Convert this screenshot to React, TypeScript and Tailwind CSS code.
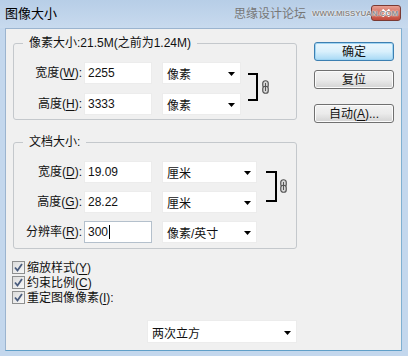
import React from "react";

const FONT = "font-['Liberation_Sans','Noto_Sans_CJK_SC',sans-serif]";

function Arrow() {
  return (
    <svg width="7" height="4" viewBox="0 0 7 4">
      <polygon points="0,0 7,0 3.5,4" fill="#000" />
    </svg>
  );
}

function Select({ text, className }: { text: string; className: string }) {
  return (
    <div
      className={`h-[22px] bg-white border border-[#ececec] flex items-center justify-between pl-[4px] pr-[5px] ${className}`}
    >
      <span className="pt-[4px]">{text}</span>
      <span className="pt-[2px]">
        <Arrow />
      </span>
    </div>
  );
}

function Row({
  label,
  u,
  value,
  unit,
  selClass,
  focused,
}: {
  label: string;
  u: string;
  value: string;
  unit: string;
  selClass: string;
  focused?: boolean;
}) {
  return (
    <div className="flex items-center h-[22px]">
      <div className="w-[68px] text-right whitespace-nowrap">
        {label}(<span className="underline underline-offset-2">{u}</span>):
      </div>
      <div
        className={`ml-[2px] w-[68px] h-[22px] bg-white flex items-center pl-[3px] border ${
          focused ? "border-[#b4c0cc]" : "border-[#ececec]"
        }`}
      >
        {value}
        {focused && <span className="inline-block w-[1px] h-[14px] bg-black ml-[1px]" />}
      </div>
      <Select text={unit} className={`ml-[10px] ${selClass}`} />
    </div>
  );
}

function Chain() {
  return (
    <svg width="7" height="14" viewBox="0 0 7 14">
      <rect x="0.75" y="0.75" width="5.5" height="7" rx="2.6" fill="#d8d8d8" stroke="#555" strokeWidth="1.2" />
      <rect x="0.75" y="6.25" width="5.5" height="7" rx="2.6" fill="#d8d8d8" stroke="#555" strokeWidth="1.2" />
      <line x1="3.5" y1="3" x2="3.5" y2="11" stroke="#555" strokeWidth="1" />
    </svg>
  );
}

function Checkbox({ children }: { children: React.ReactNode }) {
  return (
    <div className="flex items-center h-[15px]">
      <div className="w-[13px] h-[13px] border border-[#8e8f8f] bg-gradient-to-br from-[#dcdcdc] to-[#f8f8f8] flex items-center justify-center">
        <svg width="9" height="9" viewBox="0 0 9 9">
          <path d="M1 4.5 L3.5 7.5 L8 1" fill="none" stroke="#4a5c7e" strokeWidth="1.8" />
        </svg>
      </div>
      <div className="ml-[2px] whitespace-nowrap">{children}</div>
    </div>
  );
}

function Button({ children, primary }: { children: React.ReactNode; primary?: boolean }) {
  return (
    <div
      className={`w-[80px] h-[19px] rounded-[3px] border flex items-center justify-center ${
        primary
          ? "border-[#3c7fb1] bg-gradient-to-b from-[#eaf6fd] via-[#d9f0fc] to-[#a7d9f5] shadow-[inset_0_0_0_1px_#9fd4f2]"
          : "border-[#707070] bg-gradient-to-b from-[#f2f2f2] via-[#ebebeb] to-[#d3d3d3] shadow-[inset_0_0_0_1px_#fbfbfb]"
      }`}
    >
      {children}
    </div>
  );
}

export default function App() {
  return (
    <div
      className={`w-[408px] h-[356px] overflow-hidden flex flex-col bg-[#c3d7ed] text-[12px] leading-[16px] text-[#111] ${FONT}`}
    >
      {/* title bar */}
      <div className="relative h-[28px] shrink-0 flex items-center pl-[5px] bg-gradient-to-b from-[#b7cee7] to-[#c8daee]">
        <span className="text-[13px] text-black">图像大小</span>
        <div className="absolute left-[371px] top-[5px] w-[30px] h-[16px] rounded-[3px] border border-[#7a3a33] bg-gradient-to-b from-[#e8a093] via-[#d0695b] to-[#c44b3c] flex items-center justify-center">
          <svg width="10" height="8" viewBox="0 0 10 8">
            <path d="M1.5 0.5 L8.5 7.5 M8.5 0.5 L1.5 7.5" stroke="#fff" strokeWidth="2" />
          </svg>
        </div>
        <div className="absolute z-10 left-[234px] top-[6px] flex items-center whitespace-nowrap">
          <span className="text-[12px] leading-[16px] text-[#777]">思缘设计论坛</span>
          <span className="ml-[6px] text-[8px] leading-[16px] font-bold tracking-[-0.1px] text-[#8a8a8a] [text-shadow:0_0_2px_#fff,0_0_1px_#fff]">
            WWW.MISSYUAN.COM
          </span>
        </div>
      </div>

      {/* content */}
      <div className="flex-1 ml-[5px] mr-[6px] mb-[5px] bg-[#f0f0f0] border border-[#9bb4cf] border-r-[#7fb0d2] border-b-[#5f9fc8] flex">
        {/* left column */}
        <div className="ml-[7px] mt-[6px] w-[284px] flex flex-col">
          <fieldset className="border border-[#c4c8cc] rounded-[3px] pb-[4px]">
            <legend className="ml-[9px] px-[6px] leading-[16px]">像素大小:21.5M(之前为1.24M)</legend>
            <div className="flex pt-[11px]">
              <div className="flex flex-col gap-[9px]">
                <Row label="宽度" u="W" value="2255" unit="像素" selClass="w-[79px]" />
                <Row label="高度" u="H" value="3333" unit="像素" selClass="w-[79px]" />
              </div>
              <div className="ml-[7px] mt-[11px] w-[10px] h-[28px] border-y-2 border-r-2 border-black" />
              <div className="ml-[4px] mt-[18px]">
                <Chain />
              </div>
            </div>
          </fieldset>

          <fieldset className="mt-[14px] border border-[#c4c8cc] rounded-[3px] pb-[5px]">
            <legend className="ml-[9px] px-[6px] leading-[16px]">文档大小:</legend>
            <div className="flex flex-col gap-[8px] pt-[11px]">
              <div className="flex">
                <div className="flex flex-col gap-[8px]">
                  <Row label="宽度" u="D" value="19.09" unit="厘米" selClass="w-[95px]" />
                  <Row label="高度" u="G" value="28.22" unit="厘米" selClass="w-[95px]" />
                </div>
                <div className="ml-[9px] mt-[10px] w-[11px] h-[31px] border-y-2 border-r-2 border-black" />
                <div className="ml-[3px] mt-[18px]">
                  <Chain />
                </div>
              </div>
              <Row label="分辨率" u="R" value="300" unit="像素/英寸" selClass="w-[95px]" focused />
            </div>
          </fieldset>

          <div className="mt-[11px] -ml-[1px] flex flex-col">
            <Checkbox>
              缩放样式(<span className="underline underline-offset-2">Y</span>)
            </Checkbox>
            <Checkbox>
              约束比例(<span className="underline underline-offset-2">C</span>)
            </Checkbox>
            <Checkbox>
              重定图像像素(<span className="underline underline-offset-2">I</span>):
            </Checkbox>
          </div>

          <Select text="两次立方" className="mt-[15px] ml-[134px] w-[150px] h-[23px]" />
        </div>

        {/* right column */}
        <div className="ml-[17px] mt-[13px] flex flex-col">
          <Button primary>确定</Button>
          <div className="mt-[9px]">
            <Button>复位</Button>
          </div>
          <div className="mt-[15px]">
            <Button>
              自动(<span className="underline underline-offset-2">A</span>)...
            </Button>
          </div>
        </div>
      </div>
    </div>
  );
}
